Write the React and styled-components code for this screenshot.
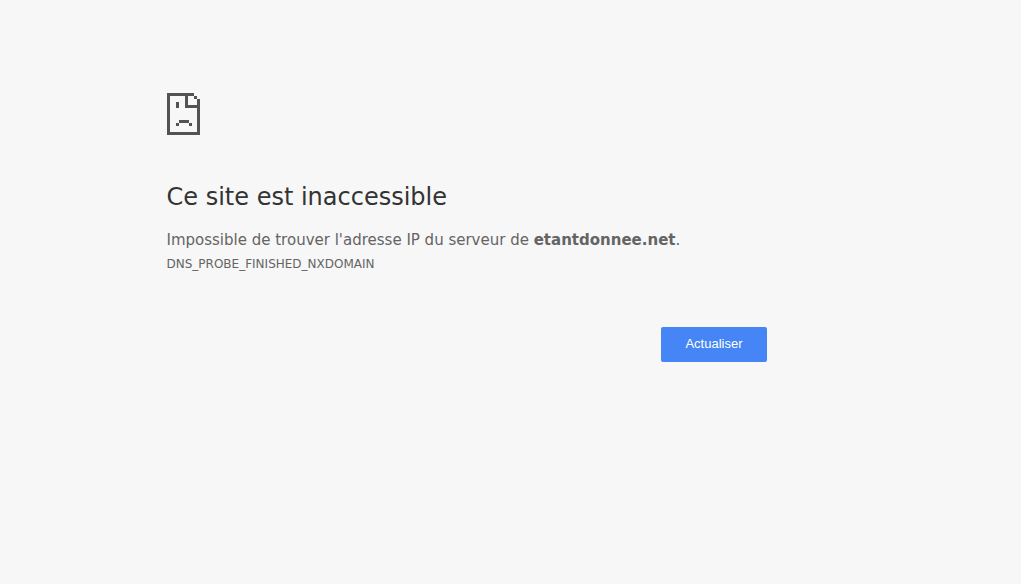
import React from "react";
import styled, { createGlobalStyle } from "styled-components";

const GlobalStyle = createGlobalStyle`
  body {
    margin: 0;
    background: #f7f7f7;
    color: #646464;
    font-family: "DejaVu Sans", sans-serif;
    font-size: 15px;
  }
`;

const Page = styled.main`
  padding: 87px 88px 0 0;
  line-height: 24px;

  @media (max-width: 760px) {
    padding: 48px 24px 0;
  }
`;

const Content = styled.div`
  max-width: 600px;
  margin: 0 auto;
`;

const SadPage = styled.svg`
  display: block;
  width: 48px;
  height: 48px;
  fill: #535353;
`;

const Title = styled.h1`
  margin: 47px 0 16px;
  color: #333;
  font-size: 24px;
  font-weight: 500;
  line-height: 30px;
`;

const Message = styled.p`
  margin: 0;
`;

const ErrorCode = styled.div`
  font-size: 12px;
`;

const Actions = styled.div`
  display: flex;
  justify-content: flex-end;
  margin-top: 51px;
`;

const ReloadButton = styled.button`
  padding: 9px 24px 11px;
  border: 0;
  border-radius: 2px;
  background: #4585f5;
  color: #fff;
  font: 13px/15px "Liberation Sans", sans-serif;
  cursor: pointer;
`;

export default function App() {
  return (
    <>
      <GlobalStyle />
      <Page>
        <Content>
          <SadPage viewBox="0 0 48 48" shapeRendering="crispEdges" aria-hidden="true">
            <path d="M0 6h27v3h-6v9h9v-6h3v36H0zM3 9v36h27V21H18V9z" fillRule="evenodd" />
            <path d="M27 9h3v3h-3zM9 15h3v6H9zM12 33h10v3H12zM9 36h3v3H9zM22 36h3v3h-3z" />
          </SadPage>
          <Title>Ce site est inaccessible</Title>
          <Message>
            Impossible de trouver l'adresse IP du serveur de <strong>etantdonnee.net</strong>.
          </Message>
          <ErrorCode>DNS_PROBE_FINISHED_NXDOMAIN</ErrorCode>
          <Actions>
            <ReloadButton type="button">Actualiser</ReloadButton>
          </Actions>
        </Content>
      </Page>
    </>
  );
}
